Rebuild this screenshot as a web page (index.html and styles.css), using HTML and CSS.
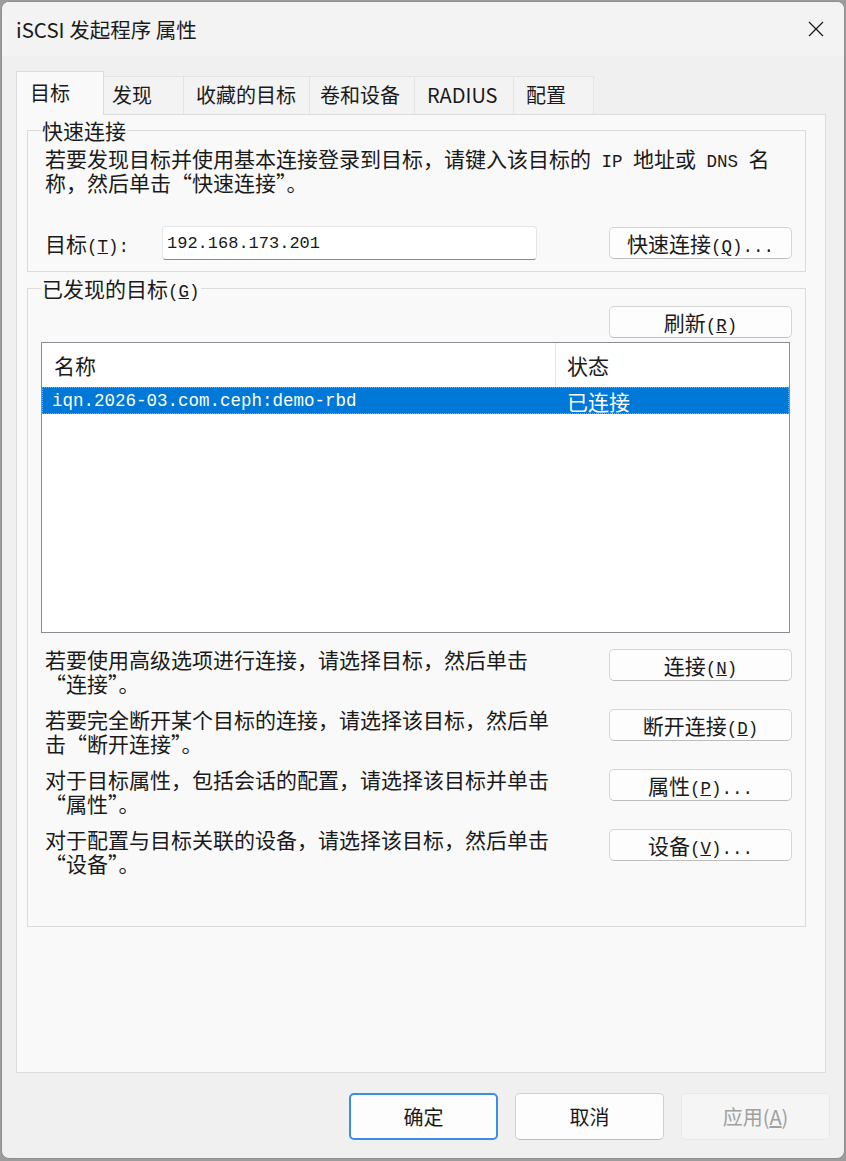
FILE: index.html
```html
<!DOCTYPE html>
<html lang="zh-CN">
<head>
  <meta charset="UTF-8" />
  <title>iSCSI 发起程序 属性</title>
  <meta name="viewport" content="width=device-width, initial-scale=1.0" />
  <link rel="stylesheet" href="styles.css">
</head>
<body>

  <div class="window">
    <div class="titlebar">
      <span class="title">iSCSI 发起程序 属性</span>
      <svg class="close" width="16" height="16" viewBox="0 0 16 16">
        <path d="M1 1 L15 15 M15 1 L1 15" stroke="#1a1a1a" stroke-width="1.3" fill="none" />
      </svg>
    </div>

    <div class="content">
      <div class="tabs">
        <div class="tab active">目标</div>
        <div class="tab">发现</div>
        <div class="tab">收藏的目标</div>
        <div class="tab">卷和设备</div>
        <div class="tab">RADIUS</div>
        <div class="tab">配置</div>
      </div>

      <div class="panel">
        <fieldset class="group quick">
          <legend>快速连接</legend>
          <p class="desc">若要发现目标并使用基本连接登录到目标，请键入该目标的<span class="latin"> IP </span>地址或<span class="latin"> DNS </span>名<br>称，然后单击“快速连接”。</p>
          <div class="target-row">
            <label for="target">目标<span class="key">(<u>T</u>):</span></label>
            <input type="text" id="target" class="target-input" value="192.168.173.201" />
            <button class="btn">快速连接<span class="key">(<u>Q</u>)...</span></button>
          </div>
        </fieldset>

        <fieldset class="group discovered">
          <legend>已发现的目标<span class="key">(<u>G</u>)</span></legend>
          <div class="refresh-row">
            <button class="btn">刷新<span class="key">(<u>R</u>)</span></button>
          </div>

          <div class="listbox">
            <div class="list-head">
              <div class="col-name">名称</div>
              <div class="col-state">状态</div>
            </div>
            <div class="list-row selected">
              <div class="col-name mono">iqn.2026-03.com.ceph:demo-rbd</div>
              <div class="col-state">已连接</div>
            </div>
          </div>

          <div class="actions">
            <div class="action">
              <p class="desc">若要使用高级选项进行连接，请选择目标，然后单击<br>“连接”。</p>
              <button class="btn">连接<span class="key">(<u>N</u>)</span></button>
            </div>
            <div class="action">
              <p class="desc">若要完全断开某个目标的连接，请选择该目标，然后单<br>击“断开连接”。</p>
              <button class="btn">断开连接<span class="key">(<u>D</u>)</span></button>
            </div>
            <div class="action">
              <p class="desc">对于目标属性，包括会话的配置，请选择该目标并单击<br>“属性”。</p>
              <button class="btn">属性<span class="key">(<u>P</u>)...</span></button>
            </div>
            <div class="action">
              <p class="desc">对于配置与目标关联的设备，请选择该目标，然后单击<br>“设备”。</p>
              <button class="btn">设备<span class="key">(<u>V</u>)...</span></button>
            </div>
          </div>
        </fieldset>
      </div>
    </div>

    <div class="footer">
      <button class="dlg-btn default">确定</button>
      <button class="dlg-btn">取消</button>
      <button class="dlg-btn" disabled>应用(<u>A</u>)</button>
    </div>
  </div>

</body>
</html>
```

FILE: styles.css
```css
:root {
  --window: #f0f0f0;
  --panel: #f9f9f9;
  --line: #dcdcdc;
  --text: #1a1a1a;
  --accent: #0078d7;
}

* {
  box-sizing: border-box;
}

body {
  margin: 0;
  background: #9c9c9c;
  font-family: "Noto Sans CJK SC", "Noto Sans", sans-serif;
  color: var(--text);
}

.window {
  margin: 1px 0 0 1px;
  width: 844px;
  height: 1158px;
  background: var(--window);
  border: 1px solid #8f8f8f;
  border-radius: 8px;
  overflow: hidden;
}

.titlebar {
  height: 54px;
  display: flex;
  align-items: center;
  justify-content: space-between;
  padding: 0 20px 0 14px;
  background: #f3f3f3;
}

.title {
  font-size: 20.5px;
}

.content {
  padding: 15px 18px 0 14px;
}

/* tabs */
.tabs {
  display: flex;
  align-items: flex-end;
  height: 43px;
}

.tab {
  height: 38px;
  line-height: 36px;
  font-size: 20px;
  padding-left: 10px;
  background: #f3f3f3;
  border: 1px solid #e3e3e3;
  border-bottom: none;
  margin-left: -1px;
}

.tab:nth-child(2) { width: 81px; padding-left: 8px; }
.tab:nth-child(3) { width: 127px; padding-left: 12px; }
.tab:nth-child(4) { width: 106px; }
.tab:nth-child(5) { width: 100px; padding-left: 12px; }
.tab:nth-child(6) { width: 81px; padding-left: 12px; }

.tab.active {
  position: relative;
  z-index: 1;
  width: 88px;
  height: 44px;
  margin: 0 0 -1px 0;
  padding-left: 13px;
  line-height: 42px;
  background: var(--panel);
  border-color: var(--line);
}

.panel {
  height: 959px;
  background: var(--panel);
  border: 1px solid var(--line);
  padding: 3px 19px 0 10px;
}

/* group boxes */
.group {
  margin: 0;
  padding: 0 13px;
  border: 1px solid var(--line);
  min-width: 0;
}

.group legend {
  font-size: 21px;
  line-height: 24px;
  padding: 0 1px;
}

.group.quick {
  padding-bottom: 11px;
}

.group.discovered {
  margin-top: 4px;
  padding-bottom: 51px;
}

.desc {
  margin: 0;
  padding-left: 4px;
  font-size: 21px;
  line-height: 24px;
  white-space: nowrap;
}

.latin,
.key {
  font-family: "Liberation Mono", monospace;
  font-size: 17.5px;
  line-height: 0;
  white-space: pre;
}

.quick .desc {
  margin-top: 4px;
}

.target-row {
  display: flex;
  align-items: center;
  margin-top: 32px;
  padding-left: 4px;
}

.target-row label {
  width: 117px;
  font-size: 21px;
}

.target-input {
  width: 375px;
  height: 34px;
  padding: 0 4px;
  background: #fff;
  border: 1px solid #e5e5e5;
  border-bottom: 1px solid #8a8a8a;
  border-radius: 4px;
  font-family: "Liberation Mono", monospace;
  font-size: 17px;
  color: var(--text);
}

.target-row .btn {
  margin-left: auto;
}

/* buttons */
.btn {
  width: 183px;
  height: 32px;
  padding: 0;
  background: #fdfdfd;
  border: 1px solid #d5d5d5;
  border-bottom-color: #bdbdbd;
  border-radius: 5px;
  font-family: "Noto Sans CJK SC", sans-serif;
  font-size: 21px;
  line-height: 30px;
  color: var(--text);
}

.refresh-row {
  display: flex;
  justify-content: flex-end;
  margin-top: 6px;
}

/* list */
.listbox {
  height: 291px;
  margin: 4px 2px 0 0;
  background: #fff;
  border: 1px solid #8a8d93;
}

.list-head,
.list-row {
  display: flex;
}

.list-head {
  height: 44px;
  align-items: center;
  font-size: 21px;
}

.list-head .col-name {
  border-right: 1px solid #e5e5e5;
  height: 100%;
  display: flex;
  align-items: center;
}

.col-name {
  width: 514px;
  padding-left: 12px;
}

.col-state {
  padding-left: 11px;
}

.list-row {
  height: 27px;
  align-items: center;
  font-size: 21px;
}

.list-row .col-name {
  padding-left: 10px;
}

.list-row.selected {
  background: var(--accent);
  color: #fff;
  outline: 1px dotted #e8923c;
  outline-offset: -1px;
}

.mono {
  font-family: "Liberation Mono", monospace;
  font-size: 17.5px;
}

/* action rows */
.actions {
  display: flex;
  flex-direction: column;
  gap: 12px;
  margin-top: 14px;
}

.action {
  display: flex;
  justify-content: space-between;
  align-items: flex-start;
}

.action .btn {
  margin-top: 2px;
}

/* footer */
.footer {
  display: flex;
  justify-content: flex-end;
  gap: 17px;
  margin-top: 20px;
  padding-right: 14px;
}

.dlg-btn {
  width: 149px;
  height: 47px;
  background: #fdfdfd;
  border: 1px solid #d0d0d0;
  border-bottom-color: #bcbcbc;
  border-radius: 5px;
  font-family: "Noto Sans CJK SC", sans-serif;
  font-size: 20px;
  color: var(--text);
}

.dlg-btn.default {
  border: 2px solid #3a8ee6;
}

.dlg-btn:disabled {
  background: #f5f5f5;
  border-color: #e8e8e8;
  color: #a0a0a0;
}
```
